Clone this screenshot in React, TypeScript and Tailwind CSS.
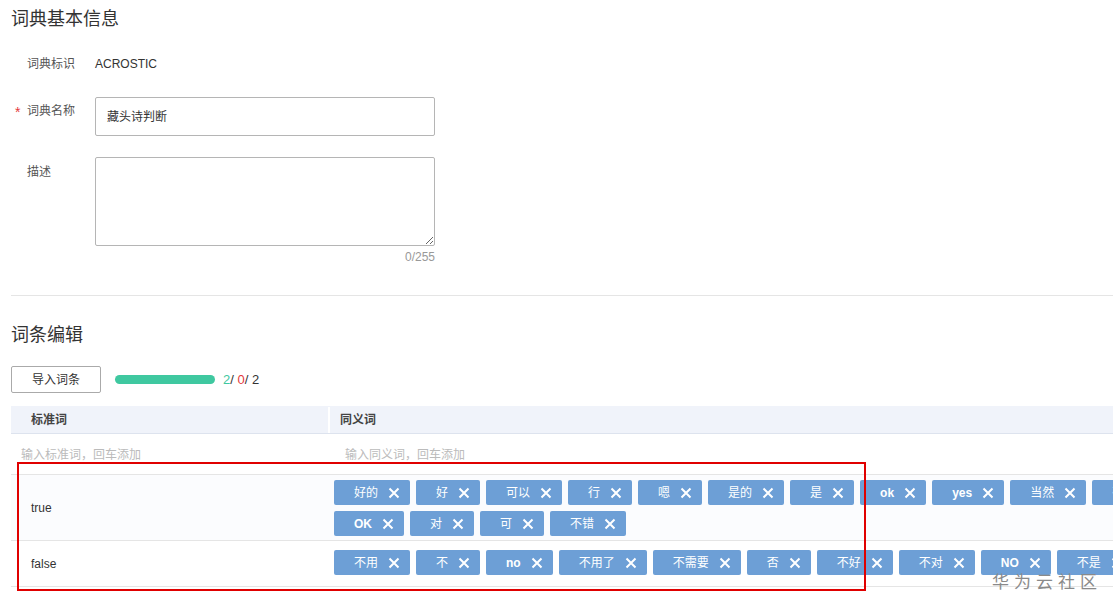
import React from 'react'

const trueTags = ['好的', '好', '可以', '行', '嗯', '是的', '是', 'ok', 'yes', '当然', '确定', 'OK', '对', '可', '不错']
const falseTags = ['不用', '不', 'no', '不用了', '不需要', '否', '不好', '不对', 'NO', '不是']

function Tag({ label }: { label: string }) {
  const latin = /^[A-Za-z]+$/.test(label)
  return (
    <span
      className={
        latin
          ? 'inline-flex items-center h-[25px] pl-[20px] pr-[10px] bg-[#6d9fd6] text-white text-[12px] font-semibold leading-none rounded-[2px]'
          : 'inline-flex items-center h-[25px] pl-[20px] pr-[10px] bg-[#6d9fd6] text-white text-[12px] leading-none rounded-[2px]'
      }
    >
      {label}
      <svg className="ml-[10px] w-[12px] h-[12px]" viewBox="0 0 12 12" fill="none" stroke="currentColor" strokeWidth={2}>
        <path d="M1.5 1.5l9 9M10.5 1.5l-9 9" />
      </svg>
    </span>
  )
}

export default function App() {
  return (
    <div
      className="relative w-[1113px] h-[609px] overflow-hidden bg-white text-[#333]"
      style={{ fontFamily: '"Liberation Sans", "Noto Sans CJK SC", sans-serif' }}
    >
      <div className="w-[1200px] pl-[11px] pt-[1px]">
        <h2 className="pt-[6px] text-[18px] leading-[24px] text-[#333]">词典基本信息</h2>

        {/* basic info form */}
        <div className="mt-[23px] flex text-[12px] leading-[20px]">
          <div className="w-[84px] pl-[16px] text-[#555]">词典标识</div>
          <div className="text-[#333]">ACROSTIC</div>
        </div>

        <div className="mt-[23px] flex text-[12px]">
          <div className="w-[84px] pt-[4px] leading-[20px] text-[#555] relative">
            <span className="absolute left-[4px] top-[5px] text-[#e4393c] text-[14px] leading-[20px]">*</span>
            <span className="pl-[16px]">词典名称</span>
          </div>
          <div className="w-[340px] h-[39px] border border-[#b5b5b5] rounded-[2px] flex items-center pl-[11px] pt-[1px] text-[#333]">
            藏头诗判断
          </div>
        </div>

        <div className="mt-[21px] flex text-[12px]">
          <div className="w-[84px] pt-[5px] pl-[16px] leading-[20px] text-[#555]">描述</div>
          <div className="w-[340px]">
            <textarea className="block w-[340px] h-[89px] border border-[#b5b5b5] rounded-[2px] outline-none" />
            <div className="mt-[1px] text-right leading-[20px] text-[#999]">0/255</div>
          </div>
        </div>

        <div className="mt-[28px] border-t border-[#e5e5e5]" />

        <h2 className="mt-[27px] text-[18px] leading-[24px] text-[#333]">词条编辑</h2>

        <div className="mt-[19px] flex items-center">
          <button className="w-[90px] h-[27px] border border-[#aaa] rounded-[2px] text-[12px] text-[#333] bg-white">
            导入词条
          </button>
          <div className="ml-[14px] w-[100px] h-[9px] rounded-full bg-[#3fc8a0]" />
          <div className="ml-[8px] text-[13px] leading-none -mt-[1px]">
            <span className="text-[#3fc8a0]">2</span>
            <span>/ </span>
            <span className="text-[#e4393c]">0</span>
            <span>/ 2</span>
          </div>
        </div>

        {/* table */}
        <div className="mt-[13px] text-[12px]">
          <div className="flex h-[28px] pt-[1px] bg-[#f0f3fa] border-b border-[#dde3ee] font-bold text-[#444]">
            <div className="w-[319px] pl-[20px] flex items-center border-r-2 border-white">标准词</div>
            <div className="flex-1 pl-[10px] flex items-center">同义词</div>
          </div>
          <div className="flex h-[41px] pt-[2px] border-b border-[#e5e5e5] text-[#bbb]">
            <div className="w-[319px] pl-[10px] flex items-center">输入标准词，回车添加</div>
            <div className="flex-1 pl-[15px] flex items-center">输入同义词，回车添加</div>
          </div>
          <div className="flex min-h-[45px] bg-[#fbfcfe] border-b border-[#e5e5e5]">
            <div className="w-[319px] pl-[20px] flex items-center">true</div>
            <div className="flex-1 pl-[4px] pr-[4px] pt-[5px] pb-[4px] flex flex-wrap gap-[6px]">
              {trueTags.map(t => <Tag key={t} label={t} />)}
            </div>
          </div>
          <div className="flex min-h-[46px] border-b border-[#e5e5e5]">
            <div className="w-[319px] pl-[20px] flex items-center">false</div>
            <div className="flex-1 pl-[4px] pr-[4px] pt-[9px] pb-[10px] flex flex-wrap gap-[6px]">
              {falseTags.map(t => <Tag key={t} label={t} />)}
            </div>
          </div>
        </div>
      </div>

      {/* annotation box */}
      <div className="absolute left-[17px] top-[462px] w-[849px] h-[129px] border-2 border-[#e00000] pointer-events-none" />

      {/* watermark */}
      <div className="absolute left-[992px] top-[572px] text-[17px] leading-[22px] tracking-[5px] text-[#8a8a8a]">
        华为云社区
      </div>
    </div>
  )
}
